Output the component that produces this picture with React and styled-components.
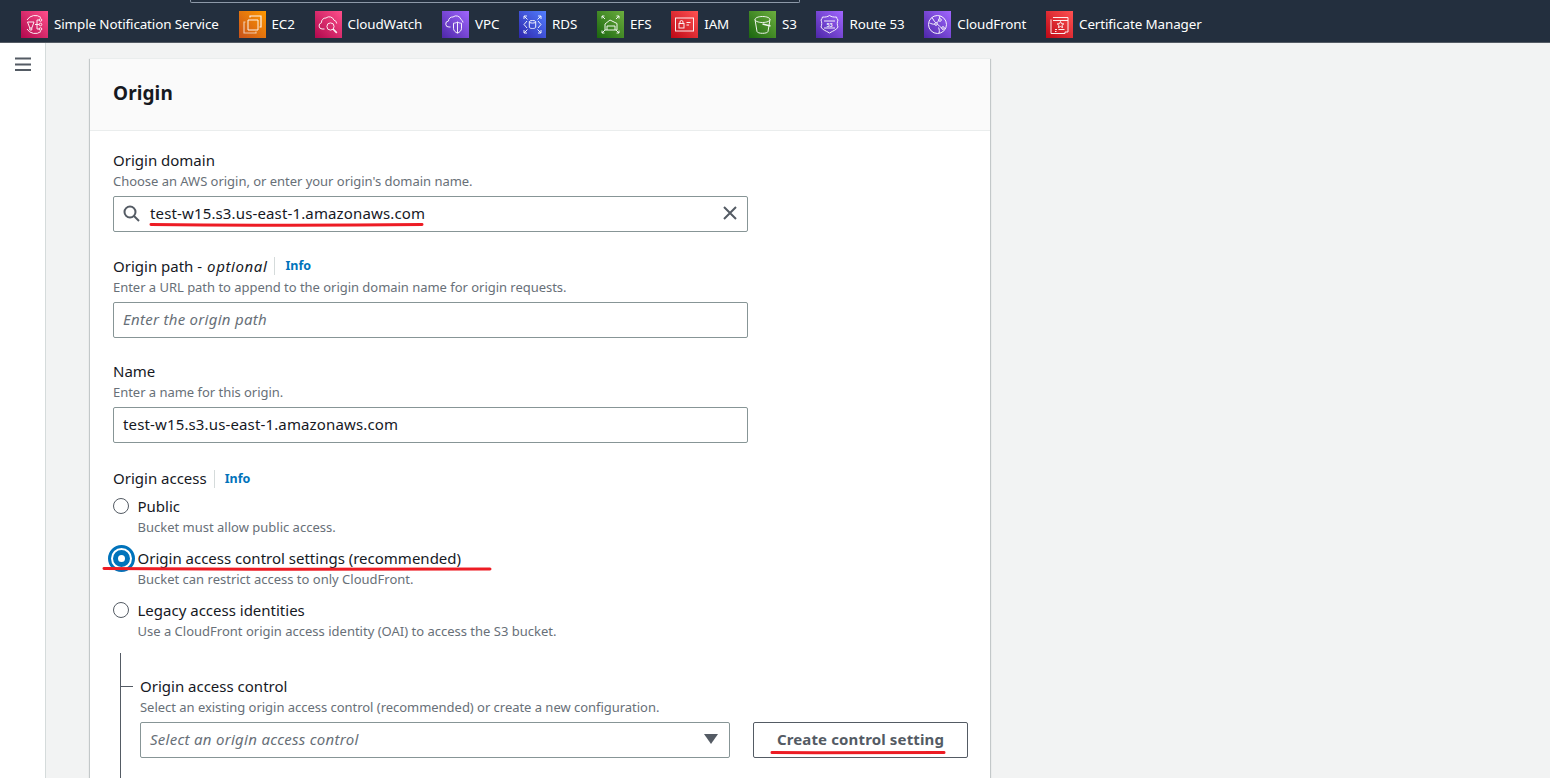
import React from "react";
import styled, { createGlobalStyle } from "styled-components";

const Global = createGlobalStyle`
  html, body { margin: 0; padding: 0; height: 778px; overflow: hidden; background: #f2f3f3; }
  body { font-family: "Noto Sans", "Open Sans", sans-serif; font-size: 15px; color: #16191f; }
  * { box-sizing: border-box; }
`;

const Shell = styled.div`display: flex; flex-direction: column; height: 778px; overflow: hidden;`;
const TopBar = styled.header`
  position: relative; flex: none; height: 43px; background: #232f3e; border-bottom: 1px solid #545b64;
  display: flex; align-items: center; padding: 6px 0 0 21px; gap: 19.75px; color: #fff;
  &::before { content: ""; position: absolute; left: 190px; width: 608px; top: 0; height: 2px; background: #232f3e; border: 1px solid #8d99a8; border-top: 0; border-radius: 0 0 2px 2px; }
`;
const Service = styled.a`display: flex; align-items: center; gap: 6px; font-size: 13.4px; line-height: 27px; white-space: nowrap; letter-spacing: -0.1px;`;
const Tile = styled.svg`display: block; flex: none; width: 27px; height: 27px;`;
const Body = styled.div`flex: 1; display: flex; min-height: 0;`;
const Rail = styled.aside`flex: none; width: 46px; background: #fff; border-right: 1px solid #d5dbdb; padding: 14px 0 0 15px;`;
const Main = styled.main`flex: 1; padding: 15px 0 0 44px; overflow: hidden;`;
const Card = styled.section`width: 900px; min-height: 900px; background: #fff; border-top: 1px solid #eaeded; box-shadow: 0 1px 1px 0 rgba(0,28,36,.3), 1px 1px 1px 0 rgba(0,28,36,.15), -1px 1px 1px 0 rgba(0,28,36,.15);`;
const CardHead = styled.div`height: 72px; background: #fafafa; border-bottom: 1px solid #eaeded; padding: 0 23px; display: flex; align-items: center;`;
const Title = styled.h2`margin: 0 0 4px; font-size: 19px; line-height: 24px; font-weight: 700; letter-spacing: .1px;`;
const Form = styled.div`padding: 18px 22px 0 23px; display: flex; flex-direction: column; gap: 22.5px;`;
const Field = styled.div`display: flex; flex-direction: column;`;
const AccessField = styled(Field)`margin-top: 1.5px;`;
const LabelRow = styled.div`display: flex; align-items: center; height: 22px; font-size: 15px;`;
const Opt = styled.i`margin-left: 5px; letter-spacing: .6px;`;
const Info = styled.a`margin: 1px 0 0 7px; padding-left: 10px; border-left: 1px solid #d5dbdb; line-height: 18px; color: #0073bb; font-size: 12.5px; font-weight: 700;`;
const Desc = styled.div`height: 21px; line-height: 21px; font-size: 13px; color: #687078; letter-spacing: -.03px; margin-bottom: 4px;`;
const Box = styled.div`
  width: ${p => p.$w}px; height: 36px; flex: none; border: 1px solid #879596; border-radius: 2px; background: #fff;
  display: flex; align-items: center; padding: 0 ${p => p.$pr ?? 9}px 2px 9px; font-size: 15px;
  letter-spacing: ${p => p.$ph ? ".28px" : ".14px"};
  color: ${p => p.$ph ? "#687078" : "#16191f"}; font-style: ${p => p.$ph ? "italic" : "normal"};
`;
const BoxText = styled.span`flex: 1; white-space: nowrap; margin-left: ${p => p.$ml ?? 0}px;`;
const Glyph = styled.svg`display: block; flex: none; color: #545b64;`;
const RadioGroup = styled.div`display: flex; flex-direction: column; gap: 10px; margin-top: 5.5px;`;
const Option = styled.div`display: grid; grid-template-columns: 24.5px 1fr; grid-template-rows: 23px 19px;`;
const RadioSlot = styled.div`position: relative; display: flex; align-items: center;`;
const Dot = styled.span`
  width: 16px; height: 16px; border-radius: 50%; border: 1.5px solid #545b64; background: #fff; display: block;
`;
const DotOn = styled.span`
  position: absolute; left: -5.5px; top: -2px; width: 27px; height: 27px; border-radius: 50%;
  display: block; background: #fff;
  border: 3px solid #0073bb;
  &::before { content: ""; position: absolute; inset: 2px; border: 5px solid #0073bb; border-radius: 50%; background: #fff; }
`;
const OptTitle = styled.div`line-height: 23px; font-size: 15px;`;
const OptDesc = styled.div`grid-column: 2; line-height: 19px; font-size: 13px; color: #687078;`;
const Nested = styled.div`margin: 12px 0 0 7px; border-left: 1px solid #545b64; padding: 22px 0 60px 19px; position: relative;`;
const Tick = styled.span`position: absolute; left: 0; top: 33px; width: 12px; height: 1px; background: #545b64;`;
const ControlRow = styled.div`display: flex; gap: 23px;`;
const Btn = styled.button`
  width: 215px; height: 36px; border: 1px solid #545b64; border-radius: 2px; background: #fff; color: #545b64;
  font: 700 15px "Noto Sans", "Open Sans", sans-serif; letter-spacing: .14px; padding: 0 0 1px;
`;
const Marks = styled.svg`position: absolute; left: 0; top: 0; width: 1550px; height: 778px; pointer-events: none; overflow: visible;`;

const grads = {
  pink: ["#b0084d", "#ff4f8b"],
  orange: ["#c8511b", "#ff9900"],
  purple: ["#4d27a8", "#a166ff"],
  blue: ["#2e27ad", "#527fff"],
  green: ["#1b660f", "#6cae3e"],
  red: ["#bd0816", "#ff5252"],
};

function Icon({ c, children }) {
  const id = "g-" + c;
  return (
    <Tile viewBox="0 0 27 27">
      <defs>
        <linearGradient id={id} x1="0" y1="1" x2="1" y2="0">
          <stop offset="0" stopColor={grads[c][0]} />
          <stop offset="1" stopColor={grads[c][1]} />
        </linearGradient>
      </defs>
      <rect width="27" height="27" fill={`url(#${id})`} />
      <g fill="none" stroke="#fff" strokeWidth="1" opacity=".92">{children}</g>
    </Tile>
  );
}

const services = [
  ["Simple Notification Service", "pink", <>
    <path d="M6 9A9.500 9.500 0 0 1 20 6.500M20 20.500A9.500 9.500 0 0 1 6 18" />
    <path d="M6.500 11h6.500l-2.200 6h-2zM8.800 17v2h2v-2" />
    <circle cx="19.500" cy="9" r="1.300" /><circle cx="19.500" cy="13.500" r="1.300" /><circle cx="19.500" cy="18" r="1.300" />
    <path d="M14 13.500h4.200M16 9v9M16 9h2.200M16 18h2.200" />
  </>],
  ["EC2", "orange", <>
    <path d="M9 9h10v10H9z" /><path d="M11 6.500V5h11v11h-1.500" strokeWidth="1.200" />
    <path d="M17 20.500V22H5V11h1.500" strokeOpacity=".7" strokeWidth="1.200" />
  </>],
  ["CloudWatch", "pink", <>
    <path d="M9.500 18H7a3.200 3.200 0 0 1-.5-6.300A4.200 4.200 0 0 1 11 7a5 5 0 0 1 8 2.200 3.500 3.500 0 0 1 2.700 3.300" />
    <circle cx="15.500" cy="15.500" r="3.600" /><path d="M18 18l3.800 3.800" strokeWidth="1.700" />
  </>],
  ["VPC", "purple", <>
    <path d="M8.500 16H7a3 3 0 0 1-.5-6A4 4 0 0 1 11 6a5 5 0 0 1 8 2.500 3.700 3.700 0 0 1 2 3" />
    <path d="M15.500 11c1.600 1 3 1.200 4 1.200v5c0 2.700-2 4-4 5-2-1-4-2.300-4-5v-5c1 0 2.400-.2 4-1.200zM15.500 11v11" />
  </>],
  ["RDS", "blue", <>
    <ellipse cx="13.500" cy="10.800" rx="3.200" ry="1.300" /><path d="M10.300 10.800v5.400c0 .7 1.400 1.300 3.200 1.300s3.200-.6 3.200-1.300v-5.400" />
    <path d="M8 10l-3 3.500L8 17M19 10l3 3.500-3 3.500" />
    <path d="M5 5l3.500 3.500M5 5v3M5 5h3M22 5l-3.500 3.500M22 5v3M22 5h-3M5 22l3.500-3.500M5 22v-3M5 22h3M22 22l-3.500-3.500M22 22v-3M22 22h-3" />
  </>],
  ["EFS", "green", <>
    <path d="M8 19v-6l5-4 7 3.500V19zM10 19v-4h8v4" />
    <path d="M5 5l3 3M5 5v2.500M5 5h2.500M22 5l-3 3M22 5v2.500M22 5h-2.500M5 22l3-3M5 22v-2.500M5 22h2.500M22 22l-3-3M22 22v-2.500M22 22h-2.500" />
  </>],
  ["IAM", "red", <>
    <rect x="4.500" y="7" width="18" height="13" />
    <rect x="8" y="12.500" width="5" height="4.500" /><path d="M9 12.500v-1.500a1.500 1.500 0 0 1 3 0v1.500M15.500 11.500h4M15.500 14h2.500" />
  </>],
  ["S3", "green", <>
    <path d="M6 8.500c0-1.500 3-3 7.500-3s7.500 1.500 7.500 3-3 3-7.500 3-7.500-1.500-7.500-3zM6 8.500l2 12c.2 1.200 2.800 1.800 5.500 1.800s5.300-.6 5.500-1.800l2-12" />
    <path d="M13.500 13l8 2" strokeWidth="1.300" />
  </>],
  ["Route 53", "purple", <>
    <path d="M13.500 4.500c2 1.300 4 1.800 7 1.500.3 1.300.8 2.200 1.500 3-1 2.500-1 4.500 0 7-1.500 3-4.500 3.500-8.500 6-4-2.500-7-3-8.500-6 1-2.500 1-4.500 0-7 .7-.8 1.200-1.700 1.500-3 3 .3 5-.2 7-1.500z" />
    <path d="M8 10h11M8 17h11" />
    <text x="13.500" y="15.800" textAnchor="middle" fontFamily="Noto Sans" fontSize="5.500" fontWeight="700" fill="#fff" stroke="none">53</text>
  </>],
  ["CloudFront", "purple", <>
    <circle cx="13.500" cy="13.500" r="9" />
    <path d="M8 6.500c3 6 6 6.500 11 12M16 5c-1 4-2 7-5 8-2 .7-4-.5-5.500-1M14.500 16.500c1 2 1 4 .5 5.800" />
    <circle cx="16" cy="9" r="1.300" fill="#7a45d8" /><circle cx="12" cy="13" r="1.300" fill="#7a45d8" /><circle cx="19" cy="17" r="1.300" fill="#7a45d8" />
  </>],
  ["Certificate Manager", "red", <>
    <path d="M7 6.500h15v14.500h-3M5 8.500v14h14v-1.500" />
    <path d="M7 9.500h15" />
    <path d="M14.500 10.500l1 2.200 2.300.2-1.800 1.500.6 2.300-2.100-1.200-2.100 1.200.6-2.300-1.800-1.500 2.300-.2z" />
    <path d="M9 18.500h2M12.500 18.500h6M9 20.500h1.500" />
  </>],
];

const Search = () => (
  <Glyph width="17" height="17" viewBox="0 0 17 17" fill="none" stroke="currentColor" strokeWidth="2">
    <circle cx="7" cy="7" r="5.500" /><path d="M11 11l5 5" />
  </Glyph>
);
const Clear = () => (
  <Glyph width="16" height="16" viewBox="0 0 16 16" fill="none" stroke="currentColor" strokeWidth="2">
    <path d="M2 2l12 12M14 2L2 14" />
  </Glyph>
);
const Caret = () => (
  <Glyph width="14" height="10" viewBox="0 0 14 10" fill="currentColor"><path d="M0 0h14L7 10z" /></Glyph>
);
const Burger = () => (
  <Glyph width="16" height="14" viewBox="0 0 16 14" fill="none" stroke="currentColor" strokeWidth="2">
    <path d="M0 1.500h16M0 7.500h16M0 13h16" />
  </Glyph>
);

const options = [
  { title: "Public", desc: "Bucket must allow public access." },
  { title: "Origin access control settings (recommended)", desc: "Bucket can restrict access to only CloudFront.", on: true },
  { title: "Legacy access identities", desc: "Use a CloudFront origin access identity (OAI) to access the S3 bucket." },
];

export default function App() {
  return (
    <Shell>
      <Global />
      <TopBar>
        {services.map(([name, c, art]) => (
          <Service key={name}><Icon c={c}>{art}</Icon>{name}</Service>
        ))}
      </TopBar>
      <Body>
        <Rail><Burger /></Rail>
        <Main>
          <Card>
            <CardHead><Title>Origin</Title></CardHead>
            <Form>
              <Field>
                <LabelRow>Origin domain</LabelRow>
                <Desc>Choose an AWS origin, or enter your origin's domain name.</Desc>
                <Box $w={635}>
                  <Search />
                  <BoxText $ml={10}>test-w15.s3.us-east-1.amazonaws.com</BoxText>
                  <Clear />
                </Box>
              </Field>
              <Field>
                <LabelRow>Origin path -<Opt>optional</Opt><Info>Info</Info></LabelRow>
                <Desc>Enter a URL path to append to the origin domain name for origin requests.</Desc>
                <Box $w={635} $ph>Enter the origin path</Box>
              </Field>
              <Field>
                <LabelRow>Name</LabelRow>
                <Desc>Enter a name for this origin.</Desc>
                <Box $w={635}>test-w15.s3.us-east-1.amazonaws.com</Box>
              </Field>
              <AccessField>
                <LabelRow>Origin access<Info>Info</Info></LabelRow>
                <RadioGroup>
                  {options.map(o => (
                    <Option key={o.title}>
                      <RadioSlot>{o.on ? <DotOn /> : <Dot />}</RadioSlot>
                      <OptTitle>{o.title}</OptTitle>
                      <OptDesc>{o.desc}</OptDesc>
                    </Option>
                  ))}
                </RadioGroup>
                <Nested>
                  <Tick />
                  <LabelRow>Origin access control</LabelRow>
                  <Desc>Select an existing origin access control (recommended) or create a new configuration.</Desc>
                  <ControlRow>
                    <Box $w={590} $ph $pr={11}><BoxText>Select an origin access control</BoxText><Caret /></Box>
                    <Btn>Create control setting</Btn>
                  </ControlRow>
                </Nested>
              </AccessField>
            </Form>
          </Card>
        </Main>
      </Body>
      <Marks viewBox="0 0 1550 778" fill="none" stroke="#ed1c24" strokeWidth="3" strokeLinecap="round">
        <path d="M151 224.500C240 225.500 340 225.500 422 224.500" />
        <path d="M104 568.500C220 569.500 380 569.500 490 569" />
        <path d="M772 752.500C830 753 890 753 944 752.500" />
      </Marks>
    </Shell>
  );
}
